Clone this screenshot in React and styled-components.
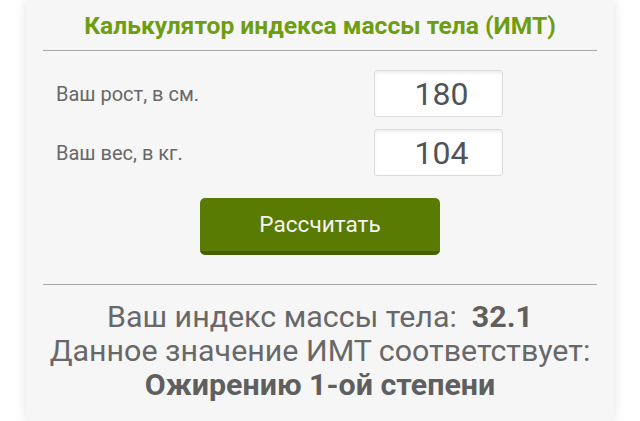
import React from "react"
import styled, { createGlobalStyle } from "styled-components"

const Global = createGlobalStyle`
  html, body {
    margin: 0;
    padding: 0;
    background: #ffffff;
    font-family: Roboto, "Noto Sans", Arial, sans-serif;
  }
`

const Page = styled.div`
  display: flex;
  justify-content: center;
  height: 421px;
  overflow: hidden;
`

const Card = styled.div`
  width: 588px;
  background: #f6f6f6;
  box-shadow: 0 0 10px rgba(0, 0, 0, 0.12);
  padding: 0 17px;
  box-sizing: border-box;
`

const Title = styled.h1`
  margin: 0;
  height: 50px;
  line-height: 51px;
  text-align: center;
  font-size: 24.6px;
  font-weight: 700;
  color: #6f9d12;
  border-bottom: 1px solid #a8a8a8;
`

const Form = styled.div`
  display: flex;
  flex-direction: column;
  padding: 19px 0 0;
  border-bottom: 1px solid #a8a8a8;
  height: 234px;
  box-sizing: border-box;
`

const Row = styled.div`
  display: flex;
  align-items: center;
  height: 47px;
  margin-bottom: 12px;
`

const Label = styled.label`
  flex: 0 0 331px;
  padding-left: 13px;
  box-sizing: border-box;
  font-size: 20px;
  color: #686868;
`

const Input = styled.div`
  width: 129px;
  height: 47px;
  box-sizing: border-box;
  background: #fff;
  border: 1px solid #dcdcdc;
  border-radius: 3px;
  box-shadow: inset 0 2px 3px rgba(0, 0, 0, 0.07);
  display: flex;
  align-items: center;
  justify-content: center;
  padding-left: 6px;
  font-size: 32px;
  color: #505458;
`

const Button = styled.button`
  align-self: center;
  margin-top: 10px;
  width: 240px;
  height: 57px;
  border: none;
  border-bottom: 4px solid #465f00;
  border-radius: 5px;
  background: #5a7b03;
  color: #f2f2f2;
  font-family: inherit;
  font-size: 22.6px;
`

const Result = styled.div`
  padding-top: 15px;
  text-align: center;
  font-size: 30.4px;
  line-height: 34px;
  color: #686868;
`

const Strong = styled.b`
  font-weight: 700;
  color: #5f5f5f;
`

export default function App() {
  return (
    <Page>
      <Global />
      <Card>
        <Title>Калькулятор индекса массы тела (ИМТ)</Title>
        <Form>
          <Row>
            <Label>Ваш рост, в см.</Label>
            <Input>180</Input>
          </Row>
          <Row>
            <Label>Ваш вес, в кг.</Label>
            <Input>104</Input>
          </Row>
          <Button>Рассчитать</Button>
        </Form>
        <Result>
          <div>Ваш индекс массы тела:&nbsp; <Strong>32.1</Strong></div>
          <div>Данное значение ИМТ соответствует:</div>
          <div><Strong>Ожирению 1-ой степени</Strong></div>
        </Result>
      </Card>
    </Page>
  )
}
